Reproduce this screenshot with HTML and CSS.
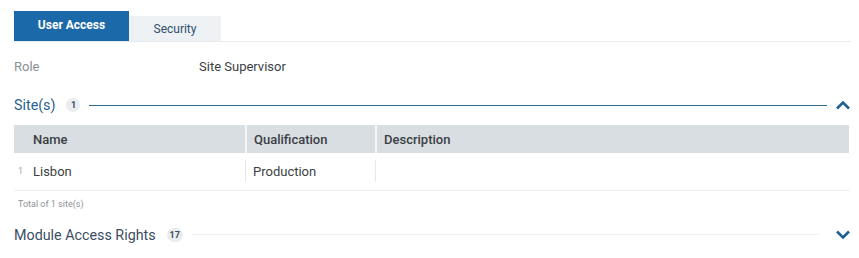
FILE: index.html
```html
<html><head>
<meta charset="UTF-8">
<title>User Access</title>
<link rel="stylesheet" href="styles.css">
</head>
<body>
  <div class="tabs">
    <a class="tab active">User Access</a>
    <a class="tab">Security</a>
  </div>

  <div class="field">
    <span class="field-label">Role</span>
    <span class="field-value">Site Supervisor</span>
  </div>

  <div class="section open">
    <span class="section-title">Site(s)</span>
    <span class="badge">1</span>
    <span class="rule"></span>
    <svg class="chevron" width="16" height="10" viewBox="0 0 16 10"><path d="M2 8.5 L8 2.5 L14 8.5" fill="none" stroke="#1f5f94" stroke-width="2.6"/></svg>
  </div>

  <table class="grid">
    <thead>
      <tr>
        <th class="num"></th>
        <th class="c-name">Name</th>
        <th class="c-qual">Qualification</th>
        <th class="c-desc">Description</th>
      </tr>
    </thead>
    <tbody>
      <tr>
        <td class="num">1</td>
        <td class="c-name">Lisbon</td>
        <td class="c-qual">Production</td>
        <td class="c-desc"></td>
      </tr>
    </tbody>
  </table>
  <div class="total">Total of 1 site(s)</div>

  <div class="section">
    <span class="section-title">Module Access Rights</span>
    <span class="badge">17</span>
    <span class="rule"></span>
    <svg class="chevron" width="16" height="10" viewBox="0 0 16 10"><path d="M2 1.5 L8 7.5 L14 1.5" fill="none" stroke="#1f5f94" stroke-width="2.6"/></svg>
  </div>
</body></html>
```

FILE: styles.css
```css
body {
  font-family: Roboto, "Liberation Sans", Arial, sans-serif;
  font-size: 13px;
  color: #3b3f44;
  margin: 0;
  padding: 11px 8px 0 14px;
  background-color: #fff;
}
.tabs {
  display: flex;
  align-items: flex-end;
  border-bottom: 1px solid #e8ebee;
  height: 30px;
}
.tab {
  font-size: 12px;
  text-align: center;
  cursor: pointer;
}
.tab.active {
  background-color: #1b69a9;
  color: #fff;
  font-weight: bold;
  width: 115px;
  height: 30px;
  line-height: 28px;
}
.tab:not(.active) {
  background-color: #eef1f4;
  color: #2f4f70;
  width: 92px;
  height: 25px;
  line-height: 26px;
}
.field {
  display: flex;
  height: 18px;
  line-height: 18px;
  margin-top: 16px;
}
.field-label {
  width: 185px;
  color: #8a8f94;
}
.field-value {
  color: #3b3f44;
}
.section {
  display: flex;
  align-items: center;
  height: 20px;
  margin-top: 19px;
}
.section-title {
  font-size: 14.3px;
  color: #3c4d62;
}
.section.open .section-title {
  color: #2b5f8f;
}
.badge {
  display: inline-block;
  min-width: 14px;
  height: 14px;
  line-height: 14px;
  padding: 0 3px;
  box-sizing: border-box;
  border-radius: 7px;
  background-color: #e9edf0;
  color: #3c4d62;
  font-size: 9px;
  font-weight: bold;
  text-align: center;
  margin-left: 11px;
}
.rule {
  flex: 1;
  height: 1px;
  background-color: #eef0f2;
  margin-left: 9px;
  margin-right: 16px;
}
.section.open .rule {
  background-color: #2f6a8e;
  margin-right: 8px;
}
.chevron {
  flex: none;
}
.grid {
  width: 837px;
  font-size: 13px;
  color: #3b3f44;
  border-collapse: collapse;
  table-layout: fixed;
}
.grid th, .grid td {
  box-sizing: border-box;
  padding: 0 7px;
}
.grid th {
  background-color: #d8dee2;
  height: 28px;
  text-align: left;
  font-weight: 500;
  border-right: 2px solid #f4f6f7;
}
.grid .num {
  width: 19px;
}
.grid th.num {
  border-right: none;
}
.grid th.c-desc {
  border-right: 2px solid #fff;
}
.grid td {
  height: 37px;
  border-bottom: 1px solid #eceef0;
}
.grid td.num {
  font-size: 9px;
  color: #a5a9ad;
  padding: 0 0 0 4px;
}
.grid td.c-name, .grid td.c-qual {
  background-image: linear-gradient(#e6e9eb, #e6e9eb);
  background-size: 1px 22px;
  background-position: right center;
  background-repeat: no-repeat;
}
.grid .c-name {
  width: 213px;
  padding-left: 0;
}
.grid .c-qual {
  width: 130px;
}
.total {
  font-size: 9px;
  color: #8d9196;
  padding-left: 4px;
  margin-top: 8px;
}
.section + .grid {
  margin-top: 10px;
}
.total + .section {
  margin-top: 16px;
}
```
